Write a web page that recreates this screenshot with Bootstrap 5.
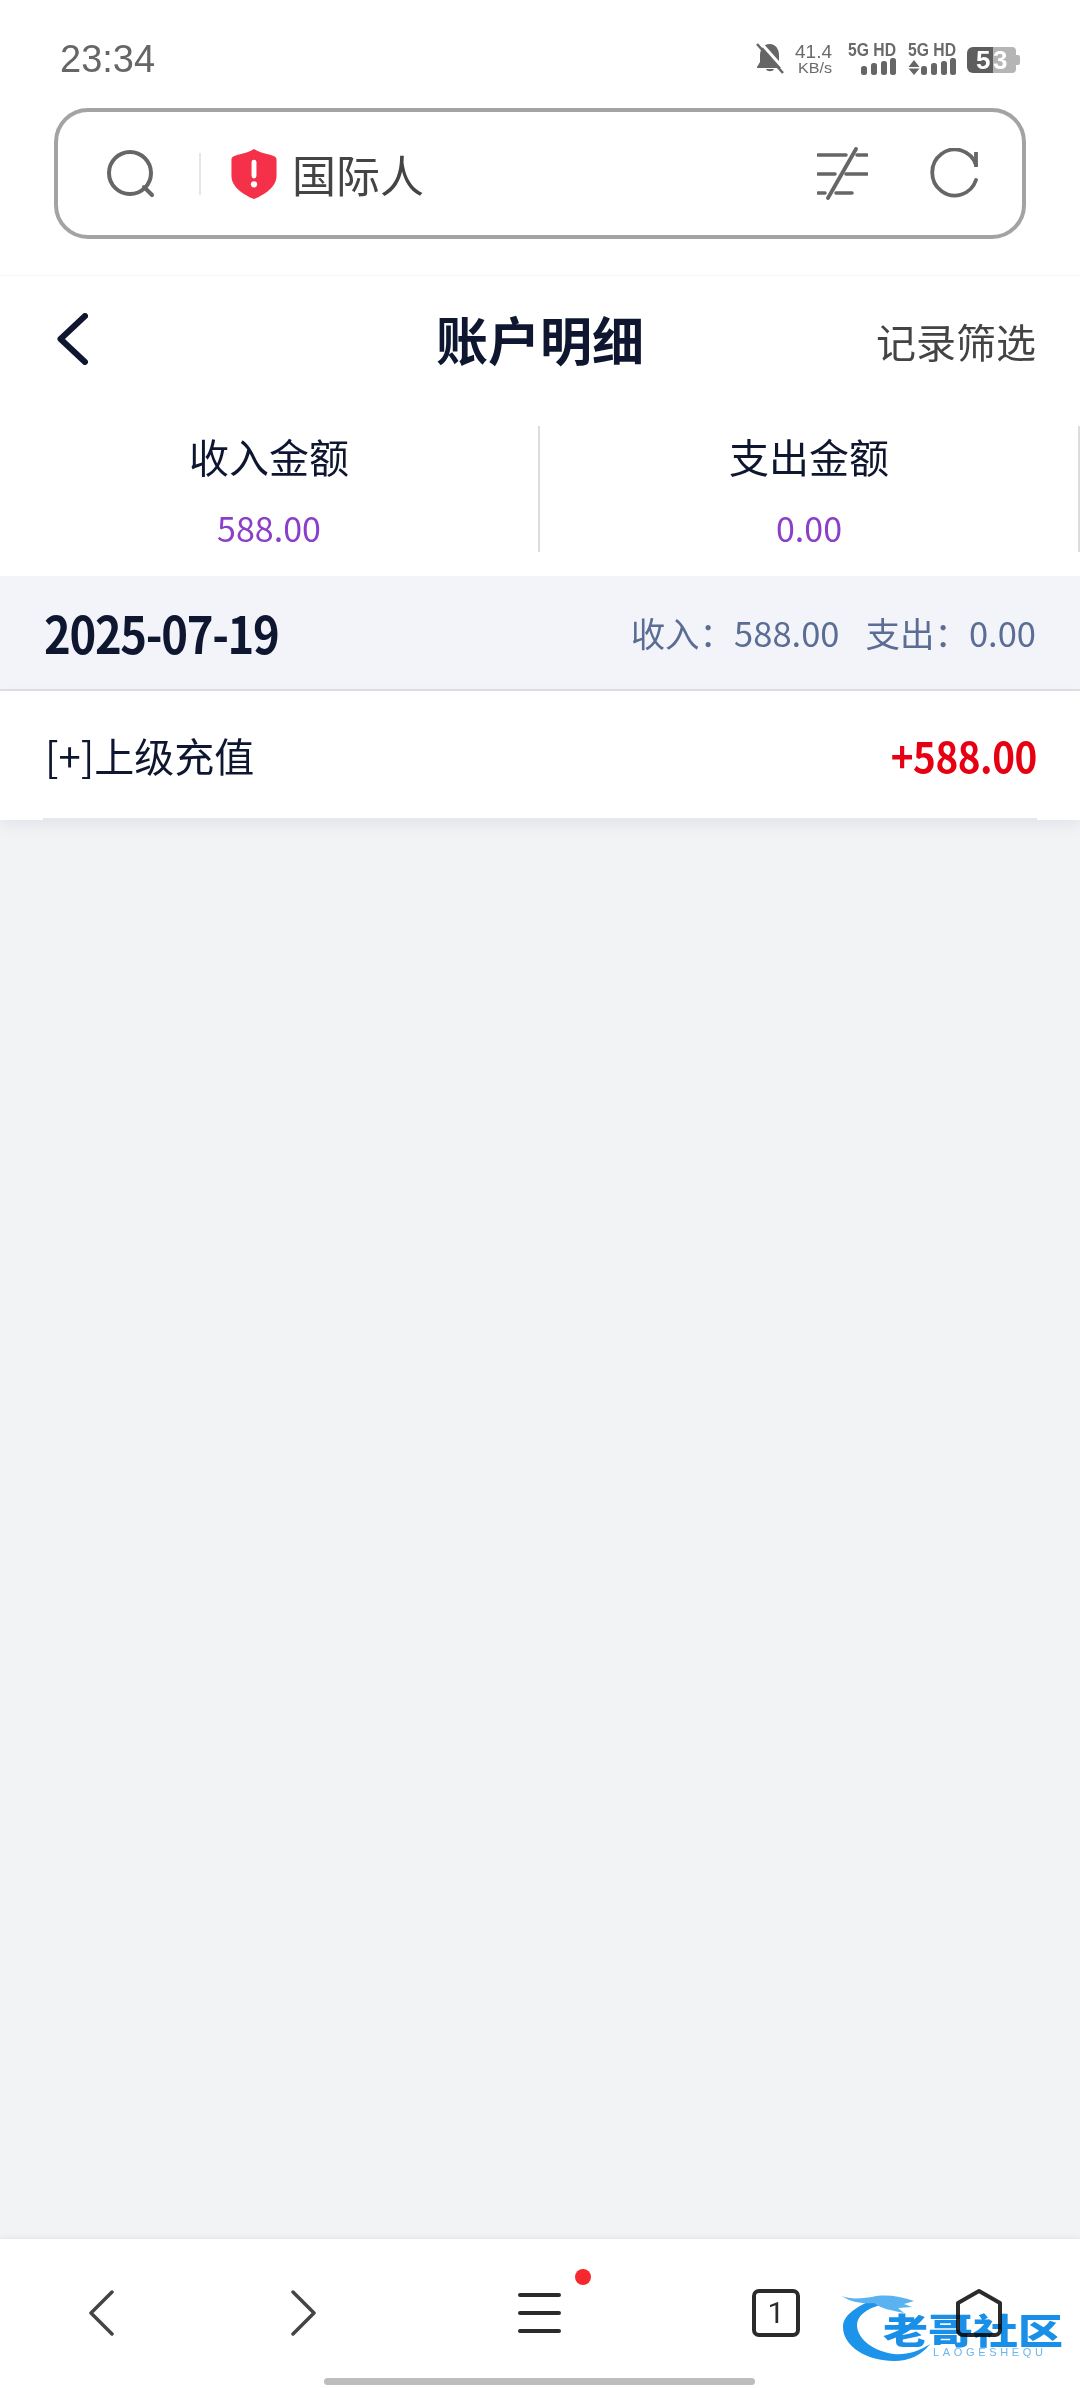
<!DOCTYPE html>
<html lang="zh">
<head>
    <meta charset="UTF-8">
    <meta name="viewport" content="width=device-width, initial-scale=1.0">
    <title>账户明细</title>
    <link href="https://cdn.jsdelivr.net/npm/bootstrap@5.3.0/dist/css/bootstrap.min.css" rel="stylesheet">
    <style>
        body {
            background-color: #f2f3f5;
            font-family: "Noto Sans CJK SC", "Noto Sans", sans-serif;
            color: #0e1630;
            min-height: 2388px;
        }
        svg { display: block; flex: none; }
        .top-area { height: 276px; border-bottom: 1px solid #f6f6f6; }
        .status-row { height: 108px; padding: 10px 60px 0 60px; }
        .clock { font-family: "Liberation Sans", sans-serif; font-size: 38px; color: #666; line-height: 1; }
        .status-text { font-family: "Liberation Sans", sans-serif; fill: #6a6a6a; }
        .url-box {
            height: 131px;
            margin: 0 54px;
            padding: 0 44px 0 49px;
            border: 4px solid #a3a3a3;
            border-radius: 34px;
        }
        .url-sep { width: 2px; height: 42px; background: #e6e6e6; margin: 0 30px 0 44px; }
        .url-text { font-size: 44px; color: #444; margin-left: 15px; line-height: 1; }
        .refresh-icon { margin-left: 62px; }
        .title-row { height: 126px; padding: 0 44px 0 57px; }
        .title-text { font-size: 52px; line-height: 1; }
        .filter-link { font-size: 40px; color: #444; line-height: 1; padding-top: 3px; }
        .tally-row { padding: 24px 0; }
        .tally-cell { height: 126px; border-right: 2px solid #dcdcdc; }
        .tally-label { font-size: 40px; line-height: 61px; }
        .tally-value { font-size: 34px; line-height: 40px; margin-top: 21px; color: #8b3fc9; }
        .day-strip { height: 115px; padding: 0 44px 0 44px; background: #f2f4f9; border-bottom: 2px solid #dcdde0; }
        .day-date { display: inline-block; font-size: 51px; line-height: 1; letter-spacing: -1.500px; transform: scaleX(.89); transform-origin: left center; }
        .day-sum { font-size: 34.500px; color: #5b6d95; line-height: 1; }
        .day-sum span + span { margin-left: 26px; }
        .entry-wrap { box-shadow: 0 6px 12px #e3e5eb; }
        .entry-row { height: 129px; margin: 0 43px 0 43px; padding: 0 0 0 2px; border-bottom: 2px solid #e6e8ed; }
        .entry-name { font-size: 40px; line-height: 1; }
        .entry-amount { display: inline-block; font-size: 42px; line-height: 1; color: #e60012; letter-spacing: -.500px; transform: scaleX(.92); transform-origin: right center; }
        .bottom-bar { height: 149px; box-shadow: 0 -2px 4px #e6e7ea; padding: 0 0 2px 89px; }
        .nav-next { margin-left: 177px; }
        .nav-menu { margin-left: 202px; }
        .nav-dot { width: 16px; height: 16px; border-radius: 50%; background: #f5282d; top: 30px; left: 575px; }
        .nav-tabs-box {
            width: 48px; height: 48px; margin-left: 191px;
            border: 4px solid #2b2b2b; border-radius: 7px;
            font-family: "Roboto", sans-serif; font-size: 30px; color: #2b2b2b; line-height: 1;
        }
        .nav-home { margin-left: 156px; }
        .grab-bar { width: 431px; height: 7px; left: 324px; bottom: 3px; background: #bdbdbd; border-radius: 4px; }
        .mark-logo { left: 842px; top: 53px; mix-blend-mode: multiply; filter: blur(.5px); }
        .mark-cn { font-weight: 900; font-size: 35px; fill: #1a8fe8; }
        .mark-en { font-family: "Liberation Sans", sans-serif; font-size: 11px; fill: #6cb4ec; }
    </style>
</head>
<body class="d-flex flex-column">
    <div class="top-area bg-white">
        <div class="status-row d-flex justify-content-between align-items-center">
            <span class="clock">23:34</span>
            <svg width="264" height="40" viewBox="0 0 264 40">
                <path d="M14 5c-6.500 0-10 5-10 11v7l-3 5v1h25v-1l-3-5v-7c0-6-3.500-11-9-11zM10 30c1 3 7 3 8 0z" fill="#666"/>
                <path d="M3 2 28 30" stroke="#fff" stroke-width="3"/>
                <path d="M1 5 27 34" stroke="#666" stroke-width="2.500"/>
                <text class="status-text" x="39" y="19" font-size="19" textLength="37" lengthAdjust="spacingAndGlyphs">41.4</text>
                <text class="status-text" x="42" y="34" font-size="15" textLength="34" lengthAdjust="spacingAndGlyphs">KB/s</text>
                <text class="status-text" x="92" y="17" font-size="19" font-weight="700" textLength="48" lengthAdjust="spacingAndGlyphs">5G HD</text>
                <text class="status-text" x="152" y="17" font-size="19" font-weight="700" textLength="48" lengthAdjust="spacingAndGlyphs">5G HD</text>
                <g fill="#666">
                    <rect x="105" y="27" width="6" height="9" rx="2.500"/><rect x="115" y="24" width="6" height="12" rx="2.500"/><rect x="125" y="22" width="6" height="14" rx="2.500"/><rect x="134" y="19" width="6" height="17" rx="2.500"/>
                    <path d="M158 21 163.500 28h-11zM158 36 163.500 29.500h-11z"/>
                    <rect x="165" y="27" width="6" height="9" rx="2.500"/><rect x="175" y="24" width="6" height="12" rx="2.500"/><rect x="185" y="22" width="6" height="14" rx="2.500"/><rect x="194" y="19" width="6" height="17" rx="2.500"/>
                    <path d="M218 8h-1a6 6 0 0 0-6 6v14a6 6 0 0 0 6 6h20V8z" fill="#5e5e5e"/>
                </g>
                <path d="M237 8h19a4 4 0 0 1 4 4v18a4 4 0 0 1-4 4h-19zM260 16h2a2 2 0 0 1 2 2v6a2 2 0 0 1-2 2h-2z" fill="#b5b5b5"/>
                <text x="220 237" y="30" font-family="Liberation Sans" font-size="26" font-weight="700" fill="#fff">53</text>
            </svg>
        </div>
        <div class="url-box d-flex align-items-center">
            <svg width="48" height="48" viewBox="0 0 48 48" fill="none" stroke="#666" stroke-width="4">
                <circle cx="23" cy="23" r="21"/><path d="M37 37 45 45" stroke-linecap="round"/>
            </svg>
            <div class="url-sep"></div>
            <svg width="46" height="50" viewBox="0 0 46 51">
                <path d="M23 0c5 3 10 4.500 15 5.500 4 1 8 2 8 5v17C46 39 33 47 23 51 13 47 0 39 0 27.500v-17c0-3 4-4 8-5C13 4.500 18 3 23 0z" fill="#f5314a"/>
                <rect x="20.500" y="11" width="5" height="19" rx="2.500" fill="#fff"/><circle cx="23" cy="36" r="3.200" fill="#fff"/>
            </svg>
            <span class="url-text">国际人</span>
            <svg class="ms-auto" width="51" height="53" viewBox="0 0 51 53" fill="none" stroke="#666" stroke-width="3.500" stroke-linecap="round">
                <path d="M1 8H29M40 8H50M1 27H18M29 27H50M1 46H8M19 46H35"/><path d="M39 2 11 51" stroke-width="3.800"/>
            </svg>
            <svg class="refresh-icon" width="48" height="52" viewBox="0 0 48 52" fill="none" stroke="#666" stroke-width="3.800" stroke-linecap="round">
                <path d="M46 32A22.500 23 0 1 1 46 17"/><path d="M46 4V19" stroke-linecap="butt"/>
            </svg>
        </div>
    </div>

    <div class="bg-white">
        <div class="title-row position-relative d-flex justify-content-between align-items-center">
            <svg width="31" height="52" viewBox="0 0 31 52" fill="none" stroke="#0e1630" stroke-width="6" stroke-linecap="round" stroke-linejoin="round">
                <path d="M28 3 3.500 26 28 49"/>
            </svg>
            <span class="title-text fw-bold position-absolute top-50 start-50 translate-middle">账户明细</span>
            <span class="filter-link">记录筛选</span>
        </div>
        <div class="tally-row row g-0">
            <div class="col-6">
                <div class="tally-cell text-center">
                    <div class="tally-label">收入金额</div>
                    <div class="tally-value">588.00</div>
                </div>
            </div>
            <div class="col-6">
                <div class="tally-cell text-center">
                    <div class="tally-label">支出金额</div>
                    <div class="tally-value">0.00</div>
                </div>
            </div>
        </div>
    </div>

    <div class="day-strip d-flex justify-content-between align-items-center">
        <span class="day-date fw-bold">2025-07-19</span>
        <div class="day-sum"><span>收入：588.00</span><span>支出：0.00</span></div>
    </div>
    <div class="entry-wrap bg-white">
        <div class="entry-row d-flex justify-content-between align-items-center">
            <span class="entry-name">[+]上级充值</span>
            <span class="entry-amount fw-bold">+588.00</span>
        </div>
    </div>

    <div class="flex-grow-1"></div>

    <div class="bottom-bar bg-white position-relative d-flex align-items-center">
        <svg width="25" height="46" viewBox="0 0 25 46" fill="none" stroke="#444" stroke-width="3.500" stroke-linecap="round" stroke-linejoin="round">
            <path d="M23 2 2 23 23 44"/>
        </svg>
        <svg class="nav-next" width="25" height="46" viewBox="0 0 25 46" fill="none" stroke="#444" stroke-width="3.500" stroke-linecap="round" stroke-linejoin="round">
            <path d="M2 2 23 23 2 44"/>
        </svg>
        <svg class="nav-menu" width="43" height="40" viewBox="0 0 43 40" fill="none" stroke="#2b2b2b" stroke-width="4" stroke-linecap="round">
            <path d="M2 2H41M2 20H41M2 38H41"/>
        </svg>
        <div class="nav-dot position-absolute"></div>
        <div class="nav-tabs-box d-flex align-items-center justify-content-center">1</div>
        <svg class="nav-home" width="46" height="48" viewBox="0 0 46 48" fill="none" stroke="#2b2b2b" stroke-width="4" stroke-linejoin="round">
            <path d="M23 2 44 14V41a5 5 0 0 1-5 5H7a5 5 0 0 1-5-5V14z"/>
        </svg>
        <svg class="mark-logo position-absolute" width="224" height="76" viewBox="0 0 224 76">
            <path d="M30 8C12 16 1 24 1 35 1 55 26 69 52 69 67 69 80 63 88 52 76 60 64 63 52 62 34 60 15 48 15 33 15 24 24 17 38 13z" fill="#1d93ea"/>
            <path d="M0 4C10 8 20 6 30 5 42 2 58 4 72 9L62 12 70 15 56 16 62 21C48 18 40 17 32 11 20 12 8 10 0 4z" fill="#5ab3f0"/>
            <text class="mark-cn" x="41" y="52" textLength="180" lengthAdjust="spacingAndGlyphs">老哥社区</text>
            <text class="mark-en" x="91" y="64" textLength="110" lengthAdjust="spacing">LAOGESHEQU</text>
        </svg>
        <div class="grab-bar position-absolute"></div>
    </div>
</body>
</html>
